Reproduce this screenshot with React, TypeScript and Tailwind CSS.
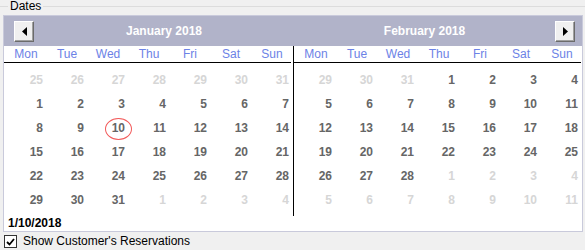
import React from 'react';

type Day = { n: number; out?: boolean; selected?: boolean };

const DAY_NAMES = ['Mon', 'Tue', 'Wed', 'Thu', 'Fri', 'Sat', 'Sun'];

const range = (a: number, b: number, out = false): Day[] => {
  const list: Day[] = [];
  for (let i = a; i <= b; i++) list.push({ n: i, out });
  return list;
};

const january: Day[] = [
  ...range(25, 31, true),
  ...range(1, 31),
  ...range(1, 4, true),
].map((d) => (!d.out && d.n === 10 ? { ...d, selected: true } : d));

const february: Day[] = [
  ...range(29, 31, true),
  ...range(1, 28),
  ...range(1, 11, true),
];

const NavButton = ({ dir }: { dir: 'prev' | 'next' }) => (
  <div className="flex h-[21px] w-[20px] items-center justify-center border border-t-white border-l-white border-r-[#6b6b6b] border-b-[#6b6b6b] bg-[#f0f0f0] shadow-[inset_-1px_-1px_0_#a0a0a0]">
    <svg width="5" height="9" viewBox="0 0 5 9">
      {dir === 'prev' ? <polygon points="5,0 0,4.5 5,9" fill="#000" /> : <polygon points="0,0 5,4.5 0,9" fill="#000" />}
    </svg>
  </div>
);

const MonthBody = ({ days, divider, pr }: { days: Day[]; divider?: boolean; pr: string }) => (
  <div className={`flex flex-col pb-[4px] ${divider ? 'w-[290px] border-r border-black' : 'flex-1'}`}>
    <div className="grid h-[17px] w-[287px] grid-cols-7 border-b border-black">
      {DAY_NAMES.map((d) => (
        <div key={d} className="pl-[3px] pt-[1px] text-center text-[12px] leading-[15px] text-[#6c82e6]">
          {d}
        </div>
      ))}
    </div>
    <div className="grid w-[287px] grid-cols-7 pt-[5px]">
      {days.map((d, i) => (
        <div key={i} className={`flex h-[24px] items-center justify-end ${pr}`}>
          <span
            className={`relative text-[12px] font-bold leading-[14px] ${d.out ? 'text-[#d6d6d6]' : 'text-[#666666]'}`}
          >
            {d.n}
            {d.selected && (
              <span className="absolute left-[-7px] top-[-3px] h-[22px] w-[27px] rounded-[50%] border-[1.5px] border-[#f25a5a]" />
            )}
          </span>
        </div>
      ))}
    </div>
  </div>
);

export default function App() {
  return (
    <div className="relative flex h-[250px] w-[585px] flex-col overflow-hidden bg-[#f0f0f0] font-['Liberation_Sans',Arial,sans-serif] text-black">
      <div className="flex h-[15px] items-start">
        <div className="mt-[6px] h-px w-[8px] bg-[#dcdcdc]" />
        <span className="px-[2px] text-[12px] leading-[12px]">Dates</span>
        <div className="mt-[6px] h-px flex-1 bg-[#dcdcdc]" />
      </div>

      <div className="ml-[3px] flex h-[217px] w-[580px] flex-col border border-[#c9cadb] bg-white">
        <div className="flex h-[30px] bg-[#b1b3c9]">
          <div className="flex w-[290px] items-center pl-[10px]">
            <NavButton dir="prev" />
            <div className="flex-1 text-center text-[12px] font-bold text-white">January 2018</div>
          </div>
          <div className="flex flex-1 items-center pr-[7px]">
            <div className="flex-1 text-center text-[12px] font-bold text-white">February 2018</div>
            <NavButton dir="next" />
          </div>
        </div>

        <div className="flex">
          <MonthBody days={january} divider pr="pr-[2px]" />
          <MonthBody days={february} pr="pr-[3px]" />
        </div>

        <div className="pl-[4px] text-[12px] font-bold leading-[15px]">1/10/2018</div>
      </div>

      <div className="flex items-center gap-[6px] pl-[4px] pt-[2px]">
        <div className="flex h-[13px] w-[13px] items-center justify-center border border-[#333333] bg-white">
          <svg width="9" height="8" viewBox="0 0 9 8">
            <path d="M1 4 L3.5 6.5 L8 1" stroke="#000" strokeWidth="1.8" fill="none" />
          </svg>
        </div>
        <span className="text-[12px] leading-[15px]">Show Customer's Reservations</span>
      </div>
    </div>
  );
}
